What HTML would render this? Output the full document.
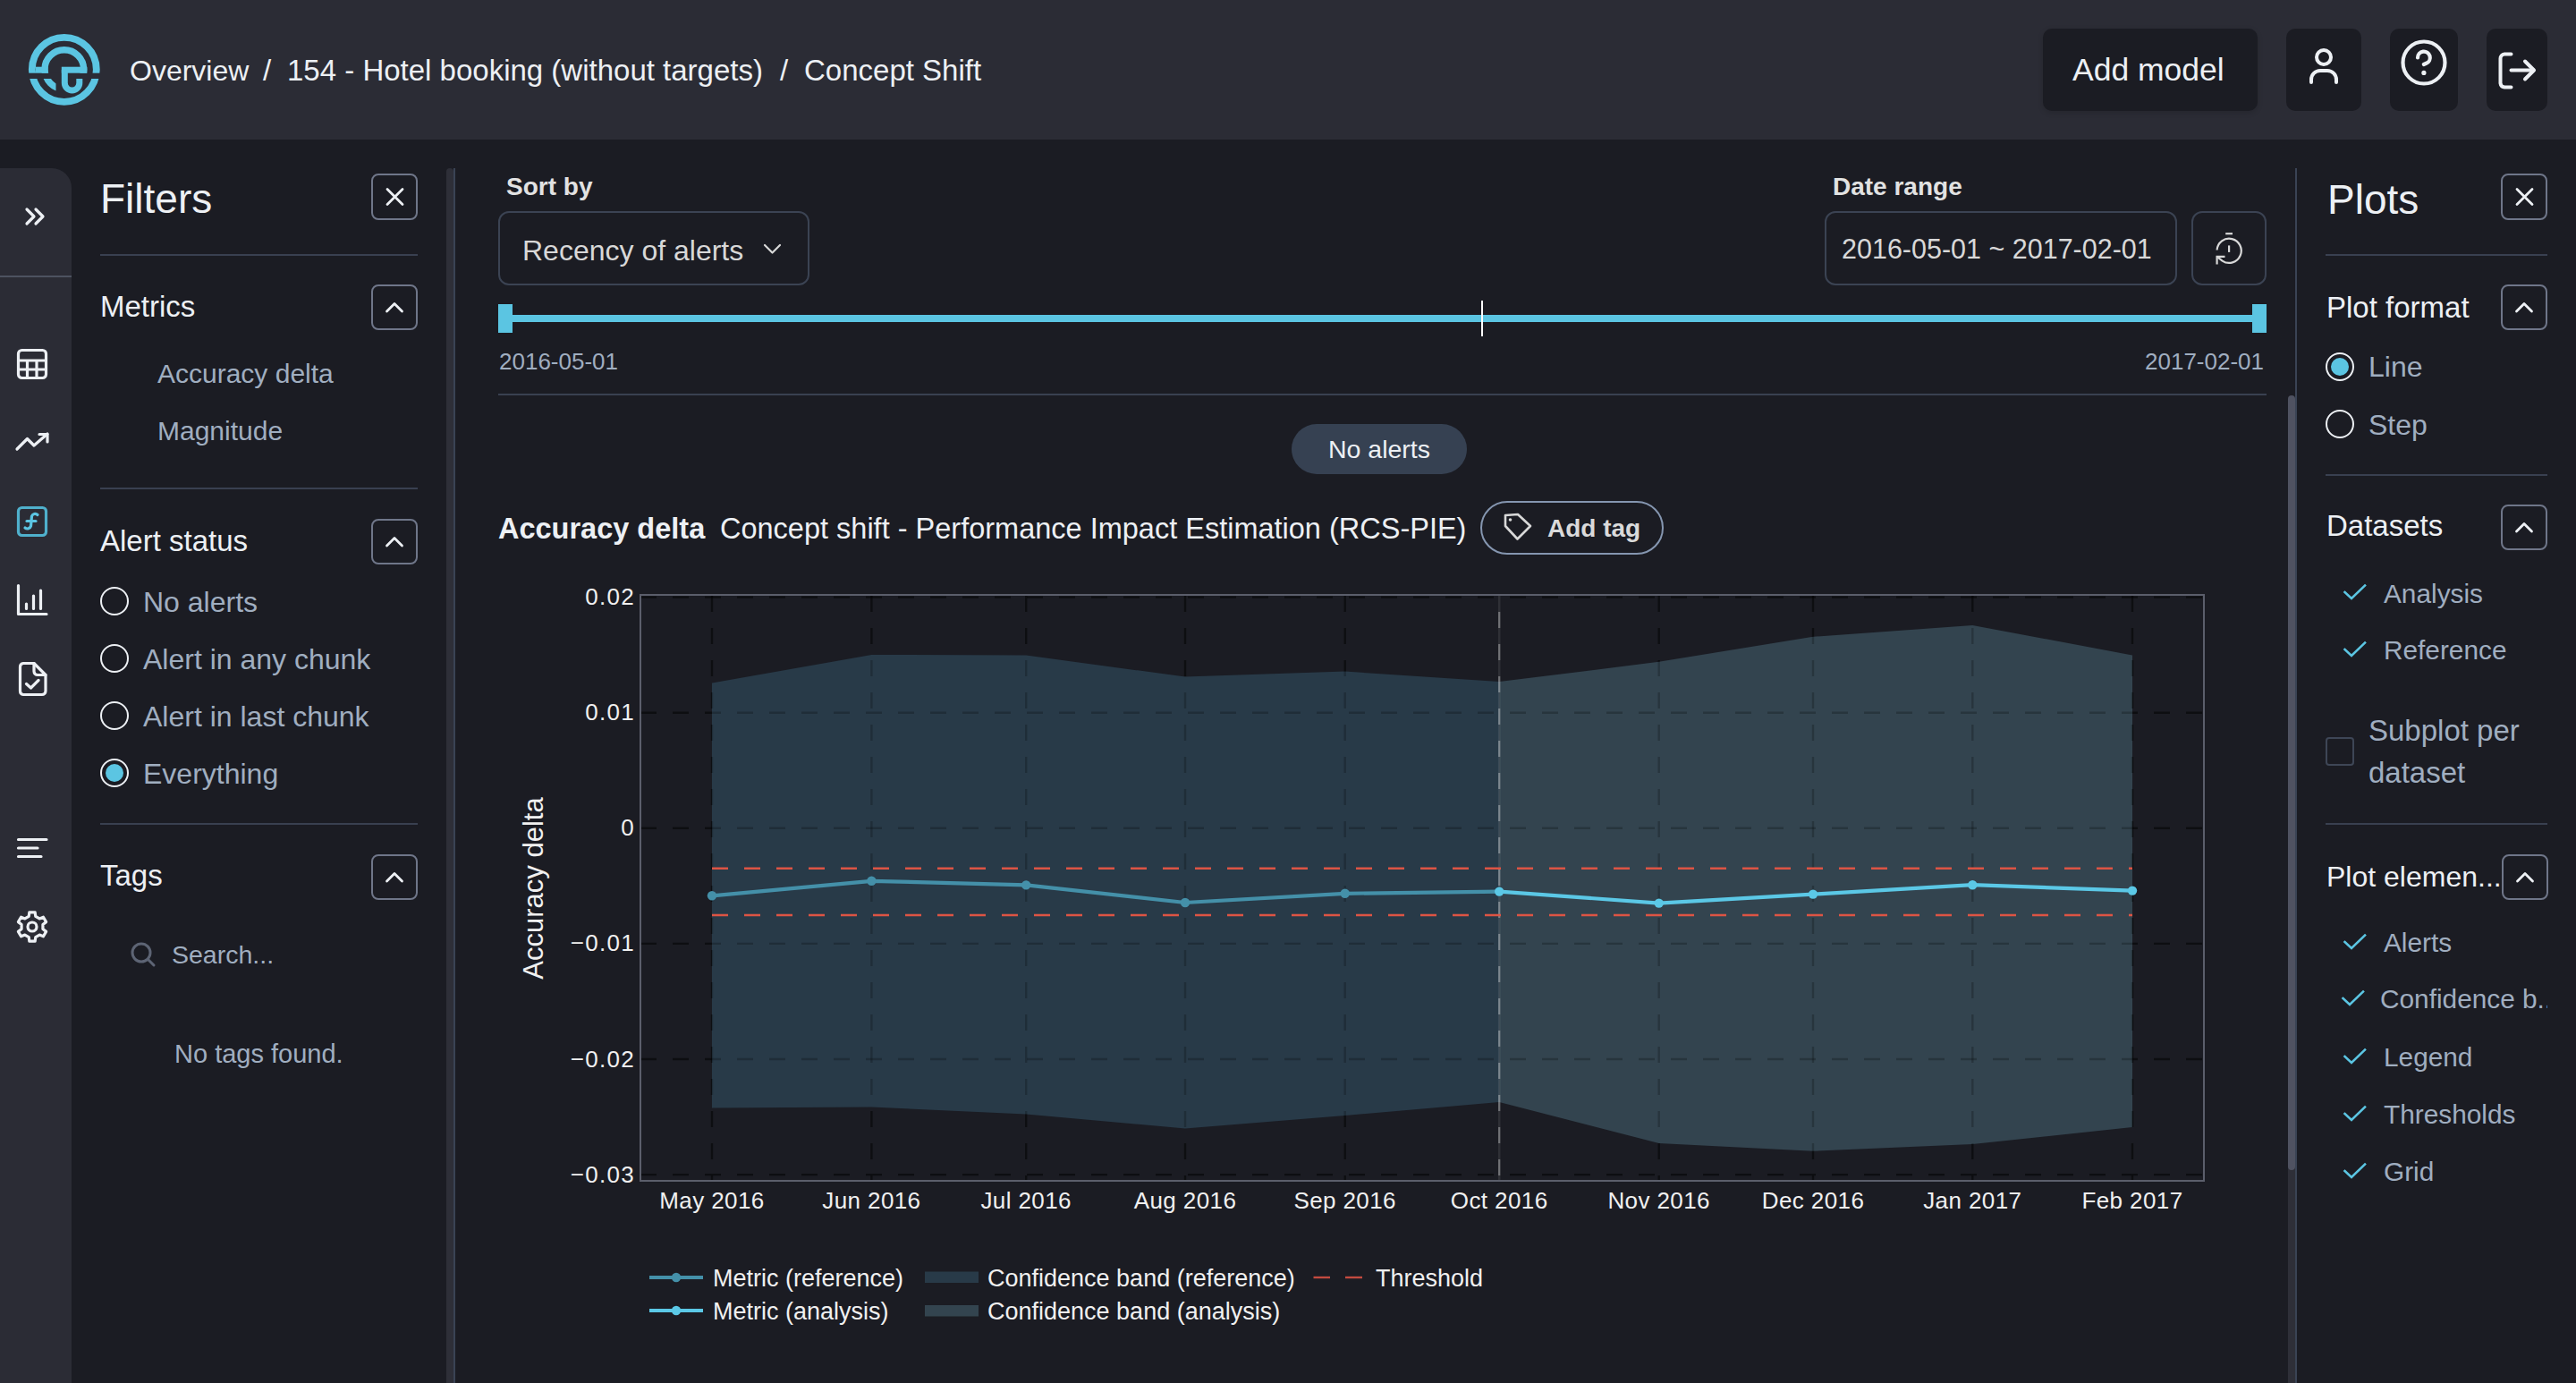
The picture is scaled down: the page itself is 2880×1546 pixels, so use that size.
<!DOCTYPE html>
<html><head><meta charset="utf-8"><title>Concept Shift</title>
<style>
html,body{margin:0;padding:0;}
body{width:2880px;height:1546px;overflow:hidden;background:#1b1c23;position:relative;font-family:"Liberation Sans", sans-serif;}
.t{position:absolute;line-height:1;white-space:pre;}
.r{position:absolute;}
svg.r{overflow:visible;}
</style></head><body>
<div class="r" style="left:0px;top:0px;width:2880px;height:156px;background:#2b2c35;"></div>
<svg class="r" style="left:24px;top:30px" width="96" height="96" viewBox="24 30 96 96">
<defs><clipPath id="lgc"><rect x="20" y="20" width="100" height="61.7"/><rect x="20" y="88" width="42.5" height="40"/></clipPath></defs>
<circle cx="71.8" cy="77.8" r="36" stroke-width="7.8" fill="none" stroke="#5bc5e2"/>
<rect x="30" y="81.7" width="84" height="6.3" fill="#2b2c35"/>
<circle cx="71.8" cy="77.6" r="21.8" stroke-width="7.4" fill="none" stroke="#5bc5e2" clip-path="url(#lgc)"/>
<rect x="40" y="74.7" width="13.5" height="7" fill="#5bc5e2"/>
<rect x="68.8" y="74.7" width="28.6" height="7" fill="#5bc5e2"/>
<path d="M 72.3 78 L 72.3 92.8 A 8.25 8.25 0 0 0 88.8 92.8 L 88.8 88" fill="none" stroke="#5bc5e2" stroke-width="7"/>
</svg>
<div class="t" style="left:145.0px;top:62.9px;font-size:32px;color:#edf0f4;">Overview</div>
<div class="t" style="left:294.0px;top:62.1px;font-size:33px;color:#edf0f4;">/</div>
<div class="t" style="left:321.0px;top:62.1px;font-size:33px;color:#edf0f4;">154 - Hotel booking (without targets)</div>
<div class="t" style="left:872.0px;top:62.1px;font-size:33px;color:#edf0f4;">/</div>
<div class="t" style="left:899.0px;top:62.1px;font-size:33px;color:#edf0f4;">Concept Shift</div>
<div class="r" style="left:2284px;top:32px;width:240px;height:92px;background:#1b1c23;border-radius:10px;box-shadow:0 2px 6px rgba(0,0,0,0.15);"></div>
<div class="t" style="left:2317.0px;top:61.3px;font-size:35.5px;color:#edf0f4;">Add model</div>
<div class="r" style="left:2556px;top:32px;width:84px;height:92px;background:#1b1c23;border-radius:10px;"></div>
<div class="r" style="left:2672px;top:32px;width:76px;height:92px;background:#1b1c23;border-radius:10px;"></div>
<div class="r" style="left:2780px;top:32px;width:68px;height:92px;background:#1b1c23;border-radius:10px;"></div>
<svg class="r" style="left:2570px;top:45px;" width="56" height="60" viewBox="0 0 56 60"><g fill="none" stroke="#edf0f4" stroke-width="4" stroke-linecap="round">
<circle cx="28" cy="19" r="8"/>
<path d="M 14 47 L 14 44 A 10 10 0 0 1 24 34 L 32 34 A 10 10 0 0 1 42 44 L 42 47"/></g></svg>
<svg class="r" style="left:2680px;top:40px;" width="60" height="60" viewBox="0 0 60 60"><g fill="none" stroke="#edf0f4" stroke-width="4.2" stroke-linecap="round">
<circle cx="30" cy="30" r="23.5"/>
<path d="M 23 24.4 A 6.9 6.9 0 1 1 32.6 30.8 L 29.8 32"/></g>
<circle cx="29.9" cy="41.4" r="2.6" fill="#edf0f4"/></svg>
<svg class="r" style="left:2786px;top:50px;" width="56" height="56" viewBox="0 0 56 56"><g fill="none" stroke="#edf0f4" stroke-width="4" stroke-linecap="round" stroke-linejoin="round">
<path d="M 21.5 10.5 L 14 10.5 A 5 5 0 0 0 9.5 15.5 L 9.5 43 A 5 5 0 0 0 14 47.5 L 21.5 47.5"/>
<path d="M 21.5 28.5 L 46.5 28.5"/>
<path d="M 37 18.5 L 47 28.5 L 37 38.5"/></g></svg>
<div class="r" style="left:0px;top:188px;width:80px;height:1358px;background:#2b2c35;border-top-right-radius:22px;"></div>
<div class="r" style="left:0px;top:308px;width:80px;height:2px;background:#4d5260;"></div>
<svg class="r" style="left:20px;top:222px;" width="40" height="40" viewBox="0 0 40 40"><g fill="none" stroke="#edf0f4" stroke-width="3.2" stroke-linecap="round" stroke-linejoin="round">
<path d="M 10 12 L 18 20 L 10 28"/><path d="M 20 12 L 28 20 L 20 28"/></g></svg>
<svg class="r" style="left:16px;top:387px;" width="40" height="40" viewBox="0 0 40 40"><g fill="none" stroke="#edf0f4" stroke-width="3.2" stroke-linejoin="round">
<rect x="4.5" y="4.5" width="31" height="31" rx="4"/>
<path d="M 4.5 16 L 35.5 16 M 4.5 26 L 35.5 26 M 14.5 16 L 14.5 35.5 M 25 16 L 25 35.5"/></g></svg>
<svg class="r" style="left:16px;top:476px;" width="42" height="34" viewBox="0 0 42 34"><g fill="none" stroke="#edf0f4" stroke-width="3.2" stroke-linecap="round" stroke-linejoin="round">
<path d="M 3 26 L 14.5 14.5 L 22 22 L 37 9"/><path d="M 28 9.5 L 37 9.5 L 37 18"/></g></svg>
<svg class="r" style="left:16px;top:563px;" width="40" height="40" viewBox="0 0 40 40"><g fill="none" stroke="#5bc5e2" stroke-width="3.2" stroke-linecap="round" stroke-linejoin="round">
<rect x="4.5" y="4.5" width="31" height="31" rx="4" stroke="#4fb0cc"/>
<path d="M 26 12.5 A 4 4 0 0 0 19.5 14 L 18.5 25 A 4 4 0 0 1 12 27"/><path d="M 14 19.5 L 24 19.5"/></g></svg>
<svg class="r" style="left:16px;top:651px;" width="40" height="40" viewBox="0 0 40 40"><g fill="none" stroke="#edf0f4" stroke-width="3.2" stroke-linecap="round" stroke-linejoin="round">
<path d="M 4.5 3.5 L 4.5 35.5 L 36 35.5"/><path d="M 13.5 29.5 L 13.5 24 M 21.5 29.5 L 21.5 15 M 29.5 29.5 L 29.5 9"/></g></svg>
<svg class="r" style="left:16px;top:737px;" width="40" height="44" viewBox="0 0 40 44"><g fill="none" stroke="#edf0f4" stroke-width="3.2" stroke-linecap="round" stroke-linejoin="round">
<path d="M 22 4.5 L 10 4.5 A 4 4 0 0 0 6.5 8.5 L 6.5 35.5 A 4 4 0 0 0 10 39.5 L 31 39.5 A 4 4 0 0 0 35 35.5 L 35 17.5 Z"/>
<path d="M 22 4.5 L 22 13.5 A 4 4 0 0 0 26 17.5 L 35 17.5"/>
<path d="M 13.5 27.5 L 18.5 32 L 27 23.5"/></g></svg>
<svg class="r" style="left:16px;top:932px;" width="40" height="32" viewBox="0 0 40 32"><g fill="none" stroke="#edf0f4" stroke-width="3.2" stroke-linecap="round">
<path d="M 4.5 6.5 L 36 6.5 M 4.5 16 L 26 16 M 4.5 25.5 L 30 25.5"/></g></svg>
<svg class="r" style="left:16px;top:1016px;" width="40" height="40" viewBox="0 0 40 40"><g fill="none" stroke="#edf0f4" stroke-width="3.2" stroke-linejoin="round">
<path d="M 16.23 8.40 L 16.85 3.80 L 23.15 3.80 L 23.77 8.40 L 28.16 10.93 L 32.45 9.18 L 35.60 14.63 L 31.93 17.46 L 31.93 22.54 L 35.60 25.37 L 32.45 30.82 L 28.16 29.07 L 23.77 31.60 L 23.15 36.20 L 16.85 36.20 L 16.23 31.60 L 11.84 29.07 L 7.55 30.82 L 4.40 25.37 L 8.07 22.54 L 8.07 17.46 L 4.40 14.63 L 7.55 9.18 L 11.84 10.93 Z"/><circle cx="20" cy="20" r="5"/></g></svg>
<div class="t" style="left:112.0px;top:199.1px;font-size:46px;color:#edf0f4;">Filters</div>
<div class="r" style="left:415px;top:194px;width:52px;height:52px;background:#1b1c23;border:2px solid #6f7689;box-sizing:border-box;border-radius:8px;"></div>
<svg class="r" style="left:415px;top:194px;" width="52" height="52" viewBox="0 0 52 52"><g stroke="#edf0f4" stroke-width="2.8" stroke-linecap="round"><path d="M 18 17.5 L 35 34.5 M 35 17.5 L 18 34.5"/></g></svg>
<div class="r" style="left:112px;top:284px;width:355px;height:2px;background:#394050;"></div>
<div class="t" style="left:112.0px;top:326.1px;font-size:33px;color:#edf0f4;">Metrics</div>
<div class="r" style="left:415px;top:318px;width:52px;height:51px;background:#1b1c23;border:2px solid #6f7689;box-sizing:border-box;border-radius:8px;"></div>
<svg class="r" style="left:415px;top:318px;" width="52" height="51" viewBox="0 0 52 51"><g fill="none" stroke="#edf0f4" stroke-width="2.8" stroke-linecap="round" stroke-linejoin="round"><path d="M 17.5 30 L 26 21.6 L 34.5 30"/></g></svg>
<div class="t" style="left:176.0px;top:402.6px;font-size:30px;color:#a0aec0;">Accuracy delta</div>
<div class="t" style="left:176.0px;top:467.1px;font-size:30px;color:#a0aec0;">Magnitude</div>
<div class="r" style="left:112px;top:545px;width:355px;height:2px;background:#394050;"></div>
<div class="t" style="left:112.0px;top:588.1px;font-size:33px;color:#edf0f4;">Alert status</div>
<div class="r" style="left:415px;top:580px;width:52px;height:51px;background:#1b1c23;border:2px solid #6f7689;box-sizing:border-box;border-radius:8px;"></div>
<svg class="r" style="left:415px;top:580px;" width="52" height="51" viewBox="0 0 52 51"><g fill="none" stroke="#edf0f4" stroke-width="2.8" stroke-linecap="round" stroke-linejoin="round"><path d="M 17.5 30 L 26 21.6 L 34.5 30"/></g></svg>
<div class="r" style="left:112px;top:656.4px;width:32px;height:32px;background:transparent;border:2.5px solid #edf0f4;box-sizing:border-box;border-radius:16px;"></div>
<div class="t" style="left:160.0px;top:656.8px;font-size:32px;color:#a0aec0;">No alerts</div>
<div class="r" style="left:112px;top:720.4px;width:32px;height:32px;background:transparent;border:2.5px solid #edf0f4;box-sizing:border-box;border-radius:16px;"></div>
<div class="t" style="left:160.0px;top:720.8px;font-size:32px;color:#a0aec0;">Alert in any chunk</div>
<div class="r" style="left:112px;top:784.4px;width:32px;height:32px;background:transparent;border:2.5px solid #edf0f4;box-sizing:border-box;border-radius:16px;"></div>
<div class="t" style="left:160.0px;top:784.8px;font-size:32px;color:#a0aec0;">Alert in last chunk</div>
<div class="r" style="left:112px;top:848.4px;width:32px;height:32px;background:transparent;border:2.5px solid #edf0f4;box-sizing:border-box;border-radius:16px;"></div>
<div class="r" style="left:118px;top:854.4px;width:20px;height:20px;background:#5bc5e2;border-radius:10px;"></div>
<div class="t" style="left:160.0px;top:848.8px;font-size:32px;color:#a0aec0;">Everything</div>
<div class="r" style="left:112px;top:920px;width:355px;height:2px;background:#394050;"></div>
<div class="t" style="left:112.0px;top:961.7px;font-size:33px;color:#edf0f4;">Tags</div>
<div class="r" style="left:415px;top:955px;width:52px;height:51px;background:#1b1c23;border:2px solid #6f7689;box-sizing:border-box;border-radius:8px;"></div>
<svg class="r" style="left:415px;top:955px;" width="52" height="51" viewBox="0 0 52 51"><g fill="none" stroke="#edf0f4" stroke-width="2.8" stroke-linecap="round" stroke-linejoin="round"><path d="M 17.5 30 L 26 21.6 L 34.5 30"/></g></svg>
<svg class="r" style="left:140px;top:1048px;" width="40" height="36" viewBox="0 0 40 36"><g fill="none" stroke="#5d6474" stroke-width="3" stroke-linecap="round"><circle cx="18" cy="17" r="10"/><path d="M 25.5 24.5 L 32 31"/></g></svg>
<div class="t" style="left:192.0px;top:1052.5px;font-size:28.5px;color:#a0aec0;">Search...</div>
<div class="t" style="left:195.0px;top:1163.5px;font-size:29px;color:#a0aec0;">No tags found.</div>
<div class="r" style="left:499px;top:188px;width:8px;height:1358px;background:#2e2f38;border-radius:4px 4px 0 0;"></div>
<div class="r" style="left:507px;top:188px;width:2px;height:1358px;background:#3a4354;"></div>
<div class="t" style="left:566.0px;top:195.3px;font-size:28px;color:#e2e2e2;font-weight:700;">Sort by</div>
<div class="r" style="left:557px;top:236px;width:348px;height:83px;background:#1b1c23;border:2px solid #3b4353;box-sizing:border-box;border-radius:12px;"></div>
<div class="t" style="left:584.0px;top:263.6px;font-size:32px;color:#d8d8d8;">Recency of alerts</div>
<svg class="r" style="left:850px;top:268px;" width="28" height="20" viewBox="0 0 28 20"><g fill="none" stroke="#d8d8d8" stroke-width="2.2" stroke-linecap="round" stroke-linejoin="round"><path d="M 5 6 L 13.5 14.5 L 22 6"/></g></svg>
<div class="t" style="left:2049.0px;top:195.3px;font-size:28px;color:#e2e2e2;font-weight:700;">Date range</div>
<div class="r" style="left:2040px;top:236px;width:394px;height:83px;background:#1b1c23;border:2px solid #3b4353;box-sizing:border-box;border-radius:12px;"></div>
<div class="t" style="left:2059.0px;top:262.5px;font-size:30.5px;color:#d8d8d8;">2016-05-01 ~ 2017-02-01</div>
<div class="r" style="left:2450px;top:236px;width:84px;height:83px;background:#1b1c23;border:2px solid #3b4353;box-sizing:border-box;border-radius:12px;"></div>
<svg class="r" style="left:2466px;top:254px;" width="50" height="50" viewBox="0 0 50 50"><g fill="none" stroke="#d8d8d8" stroke-width="2.2" stroke-linecap="butt" stroke-linejoin="miter">
<path d="M 22.2 7.2 L 30 7.2"/><path d="M 26.1 20.4 L 26.1 27.9"/>
<path d="M 12.6 25.5 A 13.6 13.6 0 1 1 18.6 37.6 L 12.6 32.8"/><path d="M 21.5 32.8 L 12.6 32.8 L 12.6 41.5"/></g></svg>
<div class="r" style="left:557px;top:352px;width:1977px;height:8px;background:#5bc5e2;"></div>
<div class="r" style="left:557px;top:340px;width:16px;height:32px;background:#5bc5e2;"></div>
<div class="r" style="left:2518px;top:340px;width:16px;height:32px;background:#5bc5e2;"></div>
<div class="r" style="left:1656px;top:336px;width:2px;height:40px;background:#ffffff;"></div>
<div class="t" style="left:558.0px;top:391.4px;font-size:26px;color:#a0aec0;">2016-05-01</div>
<div class="t" style="right:349.0px;top:391.4px;font-size:26px;color:#a0aec0;">2017-02-01</div>
<div class="r" style="left:557px;top:440px;width:1977px;height:2px;background:#394050;"></div>
<div class="r" style="left:1444px;top:474px;width:196px;height:56px;background:#364152;border-radius:28px;"></div>
<div class="t" style="left:1542.0px;top:487.9px;font-size:28.5px;color:#edf0f4;transform:translateX(-50%);">No alerts</div>
<div class="t" style="left:557.0px;top:575.0px;font-size:32.5px;color:#edf0f4;font-weight:700;">Accuracy delta</div>
<div class="t" style="left:805.0px;top:575.0px;font-size:32.5px;color:#edf0f4;">Concept shift - Performance Impact Estimation (RCS-PIE)</div>
<div class="r" style="left:1655px;top:560px;width:205px;height:60px;background:#1b1c23;border:2px solid #8596b0;box-sizing:border-box;border-radius:30px;"></div>
<svg class="r" style="left:1676px;top:568px;" width="44" height="44" viewBox="0 0 44 44"><g fill="none" stroke="#d8d8d8" stroke-width="2.6" stroke-linejoin="round">
<path d="M 7 8 L 7 20 L 20.5 34.5 L 35 20 L 21 7 Z" /></g><circle cx="12.5" cy="13" r="1.8" fill="#d8d8d8"/></svg>
<div class="t" style="left:1730.0px;top:576.6px;font-size:28px;color:#dadada;font-weight:700;">Add tag</div>
<div class="r" style="left:2558px;top:1290px;width:8px;height:256px;background:#2e2f38;"></div>
<div class="r" style="left:2558px;top:442px;width:8px;height:866px;background:#4f5261;border-radius:4px;"></div>
<div class="r" style="left:2566px;top:188px;width:2px;height:1358px;background:#3a4354;"></div>
<div class="t" style="left:2602.0px;top:199.6px;font-size:46px;color:#edf0f4;">Plots</div>
<div class="r" style="left:2796px;top:194px;width:52px;height:52px;background:#1b1c23;border:2px solid #6f7689;box-sizing:border-box;border-radius:8px;"></div>
<svg class="r" style="left:2796px;top:194px;" width="52" height="52" viewBox="0 0 52 52"><g stroke="#edf0f4" stroke-width="2.8" stroke-linecap="round"><path d="M 18 17.5 L 35 34.5 M 35 17.5 L 18 34.5"/></g></svg>
<div class="r" style="left:2600px;top:284px;width:248px;height:2px;background:#394050;"></div>
<div class="t" style="left:2601.0px;top:326.7px;font-size:33px;color:#edf0f4;">Plot format</div>
<div class="r" style="left:2796px;top:318px;width:52px;height:51px;background:#1b1c23;border:2px solid #6f7689;box-sizing:border-box;border-radius:8px;"></div>
<svg class="r" style="left:2796px;top:318px;" width="52" height="51" viewBox="0 0 52 51"><g fill="none" stroke="#edf0f4" stroke-width="2.8" stroke-linecap="round" stroke-linejoin="round"><path d="M 17.5 30 L 26 21.6 L 34.5 30"/></g></svg>
<div class="r" style="left:2600px;top:393.7px;width:32px;height:32px;background:transparent;border:2.5px solid #edf0f4;box-sizing:border-box;border-radius:16px;"></div>
<div class="r" style="left:2606px;top:399.7px;width:20px;height:20px;background:#5bc5e2;border-radius:10px;"></div>
<div class="t" style="left:2648.0px;top:393.9px;font-size:32px;color:#a0aec0;">Line</div>
<div class="r" style="left:2600px;top:458.3px;width:32px;height:32px;background:transparent;border:2.5px solid #edf0f4;box-sizing:border-box;border-radius:16px;"></div>
<div class="t" style="left:2648.0px;top:458.5px;font-size:32px;color:#a0aec0;">Step</div>
<div class="r" style="left:2600px;top:530px;width:248px;height:2px;background:#394050;"></div>
<div class="t" style="left:2601.0px;top:571.3px;font-size:33px;color:#edf0f4;">Datasets</div>
<div class="r" style="left:2796px;top:564px;width:52px;height:51px;background:#1b1c23;border:2px solid #6f7689;box-sizing:border-box;border-radius:8px;"></div>
<svg class="r" style="left:2796px;top:564px;" width="52" height="51" viewBox="0 0 52 51"><g fill="none" stroke="#edf0f4" stroke-width="2.8" stroke-linecap="round" stroke-linejoin="round"><path d="M 17.5 30 L 26 21.6 L 34.5 30"/></g></svg>
<svg class="r" style="left:2618.5px;top:651.4px;" width="30" height="28" viewBox="0 0 30 28"><g fill="none" stroke="#5bc5e2" stroke-width="2.6" stroke-linecap="square"><path d="M 2.5 11 L 10 18 L 25 3.5"/></g></svg>
<div class="t" style="left:2665.0px;top:648.7px;font-size:29.8px;color:#a0aec0;">Analysis</div>
<svg class="r" style="left:2618.5px;top:715.1px;" width="30" height="28" viewBox="0 0 30 28"><g fill="none" stroke="#5bc5e2" stroke-width="2.6" stroke-linecap="square"><path d="M 2.5 11 L 10 18 L 25 3.5"/></g></svg>
<div class="t" style="left:2665.0px;top:712.4px;font-size:29.8px;color:#a0aec0;">Reference</div>
<div class="r" style="left:2600px;top:824px;width:32px;height:32px;background:transparent;border:2px solid #3e4656;box-sizing:border-box;border-radius:4px;"></div>
<div class="t" style="left:2648.0px;top:800.3px;font-size:33px;color:#a0aec0;">Subplot per</div>
<div class="t" style="left:2648.0px;top:846.7px;font-size:33px;color:#a0aec0;">dataset</div>
<div class="r" style="left:2600px;top:920px;width:248px;height:2px;background:#394050;"></div>
<div class="t" style="left:2601.0px;top:963.6px;font-size:32px;color:#edf0f4;">Plot elemen...</div>
<div class="r" style="left:2797px;top:955px;width:52px;height:51px;background:#1b1c23;border:2px solid #6f7689;box-sizing:border-box;border-radius:8px;"></div>
<svg class="r" style="left:2797px;top:955px;" width="52" height="51" viewBox="0 0 52 51"><g fill="none" stroke="#edf0f4" stroke-width="2.8" stroke-linecap="round" stroke-linejoin="round"><path d="M 17.5 30 L 26 21.6 L 34.5 30"/></g></svg>
<svg class="r" style="left:2618.5px;top:1042.2px;" width="30" height="28" viewBox="0 0 30 28"><g fill="none" stroke="#5bc5e2" stroke-width="2.6" stroke-linecap="square"><path d="M 2.5 11 L 10 18 L 25 3.5"/></g></svg>
<div class="t" style="left:2665.0px;top:1039.3px;font-size:29.8px;color:#a0aec0;">Alerts</div>
<svg class="r" style="left:2616.5px;top:1105.2px;" width="30" height="28" viewBox="0 0 30 28"><g fill="none" stroke="#5bc5e2" stroke-width="2.6" stroke-linecap="square"><path d="M 2.5 11 L 10 18 L 25 3.5"/></g></svg>
<div class="t" style="left:2661.0px;top:1102.3px;font-size:29.8px;color:#a0aec0;width:187px;overflow:hidden;">Confidence b..</div>
<svg class="r" style="left:2618.5px;top:1169.7px;" width="30" height="28" viewBox="0 0 30 28"><g fill="none" stroke="#5bc5e2" stroke-width="2.6" stroke-linecap="square"><path d="M 2.5 11 L 10 18 L 25 3.5"/></g></svg>
<div class="t" style="left:2665.0px;top:1166.8px;font-size:29.8px;color:#a0aec0;">Legend</div>
<svg class="r" style="left:2618.5px;top:1233.7px;" width="30" height="28" viewBox="0 0 30 28"><g fill="none" stroke="#5bc5e2" stroke-width="2.6" stroke-linecap="square"><path d="M 2.5 11 L 10 18 L 25 3.5"/></g></svg>
<div class="t" style="left:2665.0px;top:1230.8px;font-size:29.8px;color:#a0aec0;">Thresholds</div>
<svg class="r" style="left:2618.5px;top:1297.7px;" width="30" height="28" viewBox="0 0 30 28"><g fill="none" stroke="#5bc5e2" stroke-width="2.6" stroke-linecap="square"><path d="M 2.5 11 L 10 18 L 25 3.5"/></g></svg>
<div class="t" style="left:2665.0px;top:1294.8px;font-size:29.8px;color:#a0aec0;">Grid</div>
<svg class="r" style="left:0;top:0" width="2880" height="1546" viewBox="0 0 2880 1546"><polygon points="796.0,763.6 974.4,731.9 1147.2,732.6 1325.0,756.5 1503.7,750.6 1676.2,762.1 1676.2,1231.9 1503.7,1247.0 1325.0,1261.5 1147.2,1245.4 974.4,1237.6 796.0,1238.6" fill="#283a48"/><polygon points="1676.2,762.1 1854.7,739.8 2027.0,711.8 2205.3,699.0 2384.0,732.4 2384.0,1260.0 2205.3,1279.0 2027.0,1286.7 1854.7,1278.0 1676.2,1231.9" fill="#33444f"/><defs><clipPath id="bandclip"><polygon points="796.0,763.6 974.4,731.9 1147.2,732.6 1325.0,756.5 1503.7,750.6 1676.2,762.1 1676.2,1231.9 1503.7,1247.0 1325.0,1261.5 1147.2,1245.4 974.4,1237.6 796.0,1238.6"/><polygon points="1676.2,762.1 1854.7,739.8 2027.0,711.8 2205.3,699.0 2384.0,732.4 2384.0,1260.0 2205.3,1279.0 2027.0,1286.7 1854.7,1278.0 1676.2,1231.9"/></clipPath>
<mask id="outband"><rect x="0" y="0" width="2880" height="1546" fill="white"/><polygon points="796.0,763.6 974.4,731.9 1147.2,732.6 1325.0,756.5 1503.7,750.6 1676.2,762.1 1676.2,1231.9 1503.7,1247.0 1325.0,1261.5 1147.2,1245.4 974.4,1237.6 796.0,1238.6" fill="black"/><polygon points="1676.2,762.1 1854.7,739.8 2027.0,711.8 2205.3,699.0 2384.0,732.4 2384.0,1260.0 2205.3,1279.0 2027.0,1286.7 1854.7,1278.0 1676.2,1231.9" fill="black"/></mask></defs><g stroke="rgba(0,0,0,0.5)" mask="url(#outband)"><line x1="716" y1="667.6" x2="2464" y2="667.6" stroke-width="2.4" stroke-dasharray="18,18"/><line x1="716" y1="796.7" x2="2464" y2="796.7" stroke-width="2.4" stroke-dasharray="18,18"/><line x1="716" y1="925.8" x2="2464" y2="925.8" stroke-width="2.4" stroke-dasharray="18,18"/><line x1="716" y1="1054.9" x2="2464" y2="1054.9" stroke-width="2.4" stroke-dasharray="18,18"/><line x1="716" y1="1184.0" x2="2464" y2="1184.0" stroke-width="2.4" stroke-dasharray="18,18"/><line x1="716" y1="1313.1" x2="2464" y2="1313.1" stroke-width="2.4" stroke-dasharray="18,18"/><line x1="796" y1="666" x2="796" y2="1320" stroke-width="2.4" stroke-dasharray="18,18"/><line x1="974.4" y1="666" x2="974.4" y2="1320" stroke-width="2.4" stroke-dasharray="18,18"/><line x1="1147.2" y1="666" x2="1147.2" y2="1320" stroke-width="2.4" stroke-dasharray="18,18"/><line x1="1325" y1="666" x2="1325" y2="1320" stroke-width="2.4" stroke-dasharray="18,18"/><line x1="1503.7" y1="666" x2="1503.7" y2="1320" stroke-width="2.4" stroke-dasharray="18,18"/><line x1="1854.7" y1="666" x2="1854.7" y2="1320" stroke-width="2.4" stroke-dasharray="18,18"/><line x1="2027" y1="666" x2="2027" y2="1320" stroke-width="2.4" stroke-dasharray="18,18"/><line x1="2205.3" y1="666" x2="2205.3" y2="1320" stroke-width="2.4" stroke-dasharray="18,18"/><line x1="2384" y1="666" x2="2384" y2="1320" stroke-width="2.4" stroke-dasharray="18,18"/></g><g stroke="rgba(0,0,0,0.22)" clip-path="url(#bandclip)"><line x1="716" y1="667.6" x2="2464" y2="667.6" stroke-width="2.4" stroke-dasharray="18,18"/><line x1="716" y1="796.7" x2="2464" y2="796.7" stroke-width="2.4" stroke-dasharray="18,18"/><line x1="716" y1="925.8" x2="2464" y2="925.8" stroke-width="2.4" stroke-dasharray="18,18"/><line x1="716" y1="1054.9" x2="2464" y2="1054.9" stroke-width="2.4" stroke-dasharray="18,18"/><line x1="716" y1="1184.0" x2="2464" y2="1184.0" stroke-width="2.4" stroke-dasharray="18,18"/><line x1="716" y1="1313.1" x2="2464" y2="1313.1" stroke-width="2.4" stroke-dasharray="18,18"/><line x1="796" y1="666" x2="796" y2="1320" stroke-width="2.4" stroke-dasharray="18,18"/><line x1="974.4" y1="666" x2="974.4" y2="1320" stroke-width="2.4" stroke-dasharray="18,18"/><line x1="1147.2" y1="666" x2="1147.2" y2="1320" stroke-width="2.4" stroke-dasharray="18,18"/><line x1="1325" y1="666" x2="1325" y2="1320" stroke-width="2.4" stroke-dasharray="18,18"/><line x1="1503.7" y1="666" x2="1503.7" y2="1320" stroke-width="2.4" stroke-dasharray="18,18"/><line x1="1854.7" y1="666" x2="1854.7" y2="1320" stroke-width="2.4" stroke-dasharray="18,18"/><line x1="2027" y1="666" x2="2027" y2="1320" stroke-width="2.4" stroke-dasharray="18,18"/><line x1="2205.3" y1="666" x2="2205.3" y2="1320" stroke-width="2.4" stroke-dasharray="18,18"/><line x1="2384" y1="666" x2="2384" y2="1320" stroke-width="2.4" stroke-dasharray="18,18"/></g><line x1="1676.2" y1="665" x2="1676.2" y2="1320" stroke="rgba(255,255,255,0.09)" stroke-width="2.6"/><line x1="1676.2" y1="684" x2="1676.2" y2="1320" stroke="rgba(255,255,255,0.32)" stroke-width="2.2" stroke-dasharray="18,18"/><line x1="796" y1="970.8" x2="2384" y2="970.8" stroke="#dd5444" stroke-width="2.4" stroke-dasharray="18,18"/><line x1="796" y1="1023" x2="2384" y2="1023" stroke="#dd5444" stroke-width="2.4" stroke-dasharray="18,18"/><polyline points="796.0,1001.3 974.4,984.8 1147.2,989.4 1325.0,1009.0 1503.7,998.8 1676.2,996.6" fill="none" stroke="#4490a9" stroke-width="4.2" stroke-linejoin="round"/><polyline points="1676.2,996.6 1854.7,1009.6 2027.0,999.6 2205.3,989.2 2384.0,995.6" fill="none" stroke="#5bc8e6" stroke-width="4.2" stroke-linejoin="round"/><circle cx="796" cy="1001.3" r="5.2" fill="#4490a9"/><circle cx="974.4" cy="984.8" r="5.2" fill="#4490a9"/><circle cx="1147.2" cy="989.4" r="5.2" fill="#4490a9"/><circle cx="1325" cy="1009" r="5.2" fill="#4490a9"/><circle cx="1503.7" cy="998.8" r="5.2" fill="#4490a9"/><circle cx="1676.2" cy="996.6" r="5.2" fill="#5bc8e6"/><circle cx="1854.7" cy="1009.6" r="5.2" fill="#5bc8e6"/><circle cx="2027" cy="999.6" r="5.2" fill="#5bc8e6"/><circle cx="2205.3" cy="989.2" r="5.2" fill="#5bc8e6"/><circle cx="2384" cy="995.6" r="5.2" fill="#5bc8e6"/><rect x="716" y="665" width="1748" height="655" fill="none" stroke="#5b5e6b" stroke-width="2"/><text x="710" y="676.1" text-anchor="end" fill="#f0f0f0" style="font-family:&quot;Liberation Sans&quot;,sans-serif;font-size:26px;letter-spacing:1.3px">0.02</text><text x="710" y="805.2" text-anchor="end" fill="#f0f0f0" style="font-family:&quot;Liberation Sans&quot;,sans-serif;font-size:26px;letter-spacing:1.3px">0.01</text><text x="710" y="934.3" text-anchor="end" fill="#f0f0f0" style="font-family:&quot;Liberation Sans&quot;,sans-serif;font-size:26px;letter-spacing:1.3px">0</text><text x="710" y="1063.4" text-anchor="end" fill="#f0f0f0" style="font-family:&quot;Liberation Sans&quot;,sans-serif;font-size:26px;letter-spacing:1.3px">−0.01</text><text x="710" y="1192.5" text-anchor="end" fill="#f0f0f0" style="font-family:&quot;Liberation Sans&quot;,sans-serif;font-size:26px;letter-spacing:1.3px">−0.02</text><text x="710" y="1321.6" text-anchor="end" fill="#f0f0f0" style="font-family:&quot;Liberation Sans&quot;,sans-serif;font-size:26px;letter-spacing:1.3px">−0.03</text><text x="796" y="1351" text-anchor="middle" fill="#f0f0f0" style="font-family:&quot;Liberation Sans&quot;,sans-serif;font-size:26px;letter-spacing:0.4px">May 2016</text><text x="974.4" y="1351" text-anchor="middle" fill="#f0f0f0" style="font-family:&quot;Liberation Sans&quot;,sans-serif;font-size:26px;letter-spacing:0.4px">Jun 2016</text><text x="1147.2" y="1351" text-anchor="middle" fill="#f0f0f0" style="font-family:&quot;Liberation Sans&quot;,sans-serif;font-size:26px;letter-spacing:0.4px">Jul 2016</text><text x="1325" y="1351" text-anchor="middle" fill="#f0f0f0" style="font-family:&quot;Liberation Sans&quot;,sans-serif;font-size:26px;letter-spacing:0.4px">Aug 2016</text><text x="1503.7" y="1351" text-anchor="middle" fill="#f0f0f0" style="font-family:&quot;Liberation Sans&quot;,sans-serif;font-size:26px;letter-spacing:0.4px">Sep 2016</text><text x="1676.2" y="1351" text-anchor="middle" fill="#f0f0f0" style="font-family:&quot;Liberation Sans&quot;,sans-serif;font-size:26px;letter-spacing:0.4px">Oct 2016</text><text x="1854.7" y="1351" text-anchor="middle" fill="#f0f0f0" style="font-family:&quot;Liberation Sans&quot;,sans-serif;font-size:26px;letter-spacing:0.4px">Nov 2016</text><text x="2027" y="1351" text-anchor="middle" fill="#f0f0f0" style="font-family:&quot;Liberation Sans&quot;,sans-serif;font-size:26px;letter-spacing:0.4px">Dec 2016</text><text x="2205.3" y="1351" text-anchor="middle" fill="#f0f0f0" style="font-family:&quot;Liberation Sans&quot;,sans-serif;font-size:26px;letter-spacing:0.4px">Jan 2017</text><text x="2384" y="1351" text-anchor="middle" fill="#f0f0f0" style="font-family:&quot;Liberation Sans&quot;,sans-serif;font-size:26px;letter-spacing:0.4px">Feb 2017</text><text transform="translate(607,993) rotate(-90)" text-anchor="middle" fill="#f0f0f0" style="font-family:&quot;Liberation Sans&quot;,sans-serif;font-size:31px">Accuracy delta</text><line x1="726" y1="1428" x2="786" y2="1428" stroke="#4490a9" stroke-width="4.2"/><circle cx="756" cy="1428" r="5.2" fill="#4490a9"/><text x="797" y="1437.5" fill="#f0f0f0" style="font-family:&quot;Liberation Sans&quot;,sans-serif;font-size:27px">Metric (reference)</text><line x1="726" y1="1465" x2="786" y2="1465" stroke="#5bc8e6" stroke-width="4.2"/><circle cx="756" cy="1465" r="5.2" fill="#5bc8e6"/><text x="797" y="1474.5" fill="#f0f0f0" style="font-family:&quot;Liberation Sans&quot;,sans-serif;font-size:27px">Metric (analysis)</text><rect x="1034" y="1421.5" width="60" height="12.5" fill="#283a48"/><text x="1104" y="1437.5" fill="#f0f0f0" style="font-family:&quot;Liberation Sans&quot;,sans-serif;font-size:27px">Confidence band (reference)</text><rect x="1034" y="1459" width="60" height="12.5" fill="#33444f"/><text x="1104" y="1474.5" fill="#f0f0f0" style="font-family:&quot;Liberation Sans&quot;,sans-serif;font-size:27px">Confidence band (analysis)</text><line x1="1468.5" y1="1428" x2="1487" y2="1428" stroke="#c24a3f" stroke-width="2.4"/><line x1="1504" y1="1428" x2="1523" y2="1428" stroke="#c24a3f" stroke-width="2.4"/><text x="1538" y="1437.5" fill="#f0f0f0" style="font-family:&quot;Liberation Sans&quot;,sans-serif;font-size:27px">Threshold</text></svg>
</body></html>
